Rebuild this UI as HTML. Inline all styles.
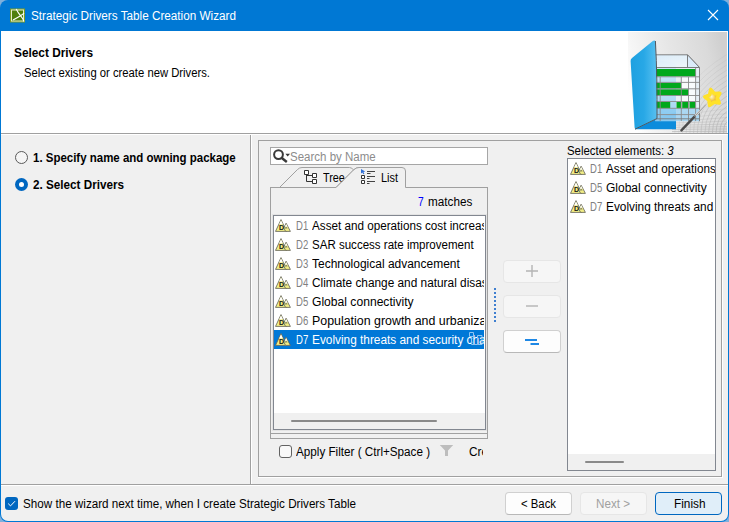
<!DOCTYPE html>
<html><head><meta charset="utf-8"><title>Strategic Drivers Table Creation Wizard</title>
<style>
html,body{margin:0;padding:0;}
body{width:729px;height:522px;overflow:hidden;background:#7fb0dc;position:relative;font-family:"Liberation Sans", sans-serif;font-size:12px;color:#000;}
.a{position:absolute;box-sizing:border-box;}
.t{position:absolute;white-space:nowrap;line-height:14px;font-size:12px;transform-origin:0 50%;}
.ic{position:absolute;overflow:visible;}
.clip{position:absolute;overflow:hidden;}
.selbg{position:absolute;left:0;width:100%;height:19px;background:#0078d7;}
.btn{position:absolute;box-sizing:border-box;border:1px solid #d0d0d0;border-radius:4px;background:#fdfdfd;}
</style></head><body>
<!-- window frame -->
<div class="a" style="left:0;top:0;width:729px;height:522px;background:#0078d4;border-radius:8px;"></div>
<div class="a" style="left:1px;top:31px;width:727px;height:490px;background:#f0f0f0;border-radius:0 0 7px 7px;"></div>
<!-- title bar -->
<svg class="ic" style="left:10px;top:8px" width="16" height="15" viewBox="0 0 16 15">
<rect x="0" y="0.500" width="15" height="14" fill="#7a9a22"/>
<rect x="1.500" y="2" width="12" height="11" fill="#4f7f0c" stroke="#e4ecc8" stroke-width="1"/>
<path d="M6.200 1 Q8.200 5 10.500 7.700 T14 13.500 M3 12 Q7.500 9.500 10.500 7.700 T14 5" stroke="#fff" stroke-width="1.100" fill="none"/>
</svg>
<svg class="ic" style="left:707px;top:9px" width="12" height="12" viewBox="0 0 12 12"><path d="M1 1 L11 11 M11 1 L1 11" stroke="#fff" stroke-width="1.1" fill="none"/></svg>
<!-- header -->
<div class="a" style="left:1px;top:31px;width:727px;height:102px;background:#fff;"></div>
<svg class="ic" style="left:628px;top:32px" width="99" height="101" viewBox="628 32 99 101">
<defs>
<linearGradient id="bg" x1="0" y1="0.6" x2="1" y2="0.35">
<stop offset="0" stop-color="#ffffff"/><stop offset="0.14" stop-color="#f6f6f6"/><stop offset="0.5" stop-color="#e6e6e6"/><stop offset="0.85" stop-color="#dadada"/><stop offset="1" stop-color="#d0d0d0"/>
</linearGradient>
<linearGradient id="cover" x1="0" y1="0" x2="1" y2="0">
<stop offset="0" stop-color="#1ea0e0"/><stop offset="0.5" stop-color="#28a8e6"/><stop offset="1" stop-color="#58c0f0"/>
</linearGradient>
<linearGradient id="back" x1="0" y1="0" x2="0" y2="1">
<stop offset="0" stop-color="#a8d8f6"/><stop offset="0.6" stop-color="#58b4ea"/><stop offset="1" stop-color="#0a88d8"/>
</linearGradient>
<linearGradient id="glass" x1="0" y1="0" x2="1" y2="1">
<stop offset="0" stop-color="#d8ecfa"/><stop offset="1" stop-color="#f4f8fc"/>
</linearGradient>
<radialGradient id="star" cx="0.45" cy="0.45" r="0.6">
<stop offset="0" stop-color="#fff6c8"/><stop offset="0.45" stop-color="#f0c040"/><stop offset="1" stop-color="#ffe432"/>
</radialGradient>
<clipPath id="imgclip"><rect x="628" y="32" width="99" height="101"/></clipPath>
</defs>
<g clip-path="url(#imgclip)">
<rect x="628" y="32" width="99" height="101" fill="url(#bg)"/>
<!-- perspective mesh -->
<g fill="none" stroke="#b6b6b6" stroke-width="0.8">
<path d="M674.9 133 Q674.9 85.6 727 54.4" opacity="0.25"/>
<path d="M678.7 133 Q678.7 88.6 727 59.6" opacity="0.31"/>
<path d="M682.4 133 Q682.4 91.6 727 64.8" opacity="0.37"/>
<path d="M686.2 133 Q686.2 94.5 727 70.0" opacity="0.43"/>
<path d="M689.9 133 Q689.9 97.5 727 75.2" opacity="0.49"/>
<path d="M693.6 133 Q693.6 100.4 727 80.4" opacity="0.55"/>
<path d="M697.4 133 Q697.4 103.4 727 85.6" opacity="0.61"/>
<path d="M701.1 133 Q701.1 106.3 727 90.8" opacity="0.67"/>
<path d="M704.9 133 Q704.9 109.3 727 96.0" opacity="0.73"/>
<path d="M708.6 133 Q708.6 112.2 727 101.2" opacity="0.79"/>
<path d="M712.4 133 Q712.4 115.2 727 106.4" opacity="0.85"/>
<path d="M716.1 133 Q716.1 118.1 727 111.6" opacity="0.91"/>
<path d="M719.9 133 Q719.9 121.1 727 116.8" opacity="0.97"/>
<path d="M723.6 133 Q723.6 124.0 727 122.0" opacity="1.00"/>
<path d="M727.3 133 Q727.3 127.0 727 127.2" opacity="1.00"/>
<path d="M672 131.6 Q700 131.3 727 131.4" opacity="0.90"/>
<path d="M672 129.4 Q700 129.1 727 129" opacity="0.82"/>
<path d="M672 127.3 Q700 127.0 727 126.6" opacity="0.74"/>
<path d="M672 125.2 Q700 124.9 727 124" opacity="0.66"/>
<path d="M672 123 Q700 122.7 727 121" opacity="0.58"/>
<path d="M672 120.5 Q700 120.2 727 117.5" opacity="0.50"/>
<path d="M672 117.5 Q700 117.2 727 113.5" opacity="0.42"/>
<path d="M672 114 Q700 113.7 727 108.5" opacity="0.34"/>
<path d="M672 110 Q700 109.7 727 102.5" opacity="0.26"/>
</g>
<!-- back cover (seen through glass) -->
<path d="M657 60 L671 62 L676 64 L676 129 L657 129 Z" fill="url(#back)"/>
<path d="M634.800 129.200 L676 129.200 L676 112 L657 118.500 Z" fill="#0c8cdc"/>
<!-- glass box -->
<path d="M648.500 54.800 L687.500 54.800 L699.500 67.500 L655.200 67.500 Z" fill="url(#glass)" stroke="#6e6e6e" stroke-width="0.9" opacity="0.95"/>
<path d="M687.500 54.800 L699.500 67.500 L699.500 121 L687.500 108 Z" fill="#e4f0fa" opacity="0.5"/>
<path d="M687.500 54.800 L699.500 67.500 L687.500 67.500 Z" fill="#dcecfa" stroke="#6e6e6e" stroke-width="0.900" stroke-linejoin="round"/>
<rect x="655.200" y="67.500" width="44.500" height="53.700" fill="#e8f3fb" opacity="0.62"/>
<rect x="655.200" y="108.400" width="44.500" height="12.800" fill="#7cc4f0" opacity="0.55"/>
<!-- green bars -->
<g fill="#00a81c">
<rect x="652.500" y="69" width="43.300" height="7.400"/>
<rect x="655.200" y="82.900" width="26" height="5.600"/>
<rect x="655.200" y="89.300" width="33" height="6"/>
<rect x="655.200" y="102" width="15" height="6.200"/>
<rect x="676.500" y="102" width="4.500" height="6.200"/>
<rect x="682.200" y="102" width="6" height="6.200"/>
<rect x="689.500" y="102" width="6" height="6.200"/>
</g>
<!-- white cells -->
<g fill="#ffffff" opacity="0.75">
<rect x="681.800" y="77.400" width="6.200" height="4.800"/><rect x="689" y="77.400" width="6.300" height="4.800"/>
<rect x="681.800" y="83" width="6.200" height="5.200"/><rect x="689" y="83" width="6.300" height="5.200"/>
<rect x="689" y="89.400" width="6.300" height="5.600"/>
<rect x="681.800" y="96" width="6.200" height="5"/><rect x="689" y="96" width="6.300" height="5"/>
</g>
<!-- grid -->
<g fill="none" stroke="#8a8a8a" stroke-width="0.9">
<path d="M655.200 76.800 H699.500 M655.200 82.400 H699.500 M655.200 88.800 H699.500 M655.200 95.500 H699.500 M655.200 101.500 H699.500 M655.200 108.300 H699.500 M655.200 114.600 H699.500"/>
<path d="M660.200 76.800 V121 M681.300 76.800 V121 M688.500 76.800 V121 M695.600 67.500 V121"/>
<path d="M655.200 67.500 H699.500 V121.200 M699.500 118.800 H655.200" stroke="#787878"/>
</g>
<!-- front cover -->
<path d="M630.600 61 Q630.400 59.300 632 58 L652.500 41.200 Q655 39.500 655.600 42 L657 118.500 L636.500 129 Q634.800 129.600 634.600 127.500 Z" fill="url(#cover)"/>
<path d="M655.400 41 Q656.500 60 656.800 80 T657 118.500 L635 129.200" fill="none" stroke="#505860" stroke-width="1"/>
<!-- wand -->
<path d="M681.400 130.400 L706 104.500" stroke="#d8d8d8" stroke-width="2.200" stroke-linecap="round"/>
<path d="M681.400 130.400 L694.500 116.600" stroke="#4a4a4a" stroke-width="2.400" stroke-linecap="round"/>
<path d="M694.500 116.600 L706 104.500" stroke="#9a9a9a" stroke-width="1"/>
<!-- star -->
<path d="M710.800 89.600 L714.400 93.600 L719.800 93.200 L717.300 98 L719.200 103 L714 102.200 L709.600 105.400 L709 100.200 L704.800 96.800 L709.600 94.800 Z" fill="url(#star)" stroke="#ffe22a" stroke-width="3.600" stroke-linejoin="round"/>
</g>
</svg>

<div class="a" style="left:1px;top:133px;width:727px;height:1px;background:#a0a0a0;"></div>
<div class="a" style="left:1px;top:134px;width:727px;height:1px;background:#fff;"></div>
<!-- left steps -->
<div class="a" style="left:15px;top:151px;width:13px;height:13px;border:1px solid #5a5a5a;border-radius:50%;background:#f5f5f5;"></div>
<div class="a" style="left:15px;top:178px;width:13px;height:13px;border-radius:50%;background:#0067c0;"></div>
<div class="a" style="left:19px;top:182px;width:5px;height:5px;border-radius:50%;background:#fff;"></div>
<!-- vertical divider -->
<div class="a" style="left:250px;top:135px;width:1px;height:349px;background:#a0a0a0;"></div>
<div class="a" style="left:251px;top:135px;width:1px;height:349px;background:#fff;"></div>
<!-- right etched panel -->
<div class="a" style="left:258px;top:140px;width:465px;height:338px;border:1px solid #fff;"></div>
<div class="a" style="left:258px;top:140px;width:464px;height:337px;border:1px solid #a0a0a0;"></div>
<!-- search -->
<div class="a" style="left:270px;top:147px;width:218px;height:18px;border:1px solid #a6a6a6;background:#fff;"></div>
<svg class="ic" style="left:272px;top:147px" width="18" height="17" viewBox="0 0 18 17">
<circle cx="6.500" cy="7.600" r="4.400" fill="none" stroke="#3a3a3a" stroke-width="2"/>
<path d="M9.800 11 L14.800 15" stroke="#3a3a3a" stroke-width="2.400"/>
<path d="M13.400 6.800 L18 6.800 L15.700 9.600 Z" fill="#3a3a3a"/>
</svg>
<!-- tabs -->
<svg class="ic" style="left:268px;top:165px" width="224" height="26" viewBox="268 165 224 26">
<path d="M270.5 437.5 L270.5 187.5 L336 187.5" fill="none" stroke="#a0a0a0"/>
<path d="M279.500 187.500 L297.500 169.500 Q299.500 167.500 302 167.500 L349.500 167.500 Q352 167.500 353.800 170.200" fill="none" stroke="#a0a0a0"/>
<path d="M336 187.500 L353.500 170 Q356 167.500 359 167.500 L402 167.500 Q405.500 167.500 405.500 171 L405.500 187.500 L487.500 187.500" fill="none" stroke="#a0a0a0"/>
</svg>
<div class="a" style="left:270px;top:187px;width:1px;height:247px;background:#a0a0a0;"></div>
<div class="a" style="left:487px;top:187px;width:1px;height:247px;background:#a0a0a0;"></div>
<div class="a" style="left:270px;top:433px;width:218px;height:6px;border:1px solid #a0a0a0;"></div>
<!-- tree icon -->
<svg class="ic" style="left:304px;top:170px" width="14" height="14" viewBox="0 0 14 14">
<path d="M0.500 0.500 H4.500 V4.500 H0.500 Z M8.500 3.500 H12.500 V7.500 H8.500 Z M8.500 9.500 H12.500 V13.500 H8.500 Z" fill="#fff" stroke="#333" stroke-width="1"/>
<path d="M2.500 4.500 V11.500 H8.500 M2.500 5.500 H8.500" fill="none" stroke="#333" stroke-width="1"/>
</svg>
<!-- list icon -->
<svg class="ic" style="left:361px;top:169px" width="15" height="16" viewBox="0 0 15 16">
<path d="M0 0 L4.200 2.600 L2.400 3 L3.400 4.800 L2.400 5.200 L1.400 3.500 L0 4.600 Z" fill="#2f6fd8"/>
<path d="M0.500 6.500 H3.500 V9.500 H0.500 Z M0.500 11.500 H3.500 V14.500 H0.500 Z" fill="#fff" stroke="#333"/>
<path d="M6 2.500 H14 M6 4.500 H9.500 M6 7.500 H14 M6 9.500 H8.500 M6 12.500 H14 M6 14.500 H8.500" stroke="#444" fill="none"/>
</svg>
<!-- list box -->
<div class="a" style="left:272px;top:214px;width:215px;height:217px;border:1px solid #e3e3e3;"></div>
<div class="a" style="left:273px;top:215px;width:213px;height:215px;border:1px solid #828790;background:#fff;"></div>
<div class="clip" style="left:274px;top:216px;width:210px;height:197px;">
<div style="position:absolute;left:-274px;top:-216px;width:729px;height:522px;">
<svg class="ic" style="left:275px;top:219px" width="16" height="14" viewBox="0 0 16 14">
<path d="M6 0.600 L0.500 12.400 L11.600 12.400 Z" fill="#f2ee84" stroke="#66665c" stroke-width="0.850" stroke-linejoin="round"/>
<path d="M11.100 4.200 L8.800 9 L10.600 12.400 L15.400 12.400 Z" fill="#f2ee84" stroke="#66665c" stroke-width="0.850" stroke-linejoin="round"/>
<path d="M6 1.500 L4.100 5.600 L5.200 4.900 L6.100 5.700 L7 4.800 L8 5.600 Z" fill="#fff"/>
<path d="M11.100 5.100 L9.800 7.900 L10.600 7.400 L11.200 8.100 L11.800 7.400 L12.600 8 Z" fill="#fff"/>
<path d="M10.300 9.600 L11.100 7.900 L12 9.600 M10.500 9 H11.700" fill="none" stroke="#66665c" stroke-width="0.600"/>
<text x="6.500" y="11.300" font-family='"Liberation Sans",sans-serif' font-weight="bold" font-size="7" text-anchor="middle" fill="#151515">D</text>
</svg>
<span class="t" style="left:296px;top:219px;transform:scaleX(0.7951);color:#7f7f7f;" id="Lid0">D1</span>
<span class="t" style="left:312.4px;top:219px;transform:scaleX(0.9736);" id="Lt0">Asset and operations cost increase</span>
<svg class="ic" style="left:275px;top:238px" width="16" height="14" viewBox="0 0 16 14">
<path d="M6 0.600 L0.500 12.400 L11.600 12.400 Z" fill="#f2ee84" stroke="#66665c" stroke-width="0.850" stroke-linejoin="round"/>
<path d="M11.100 4.200 L8.800 9 L10.600 12.400 L15.400 12.400 Z" fill="#f2ee84" stroke="#66665c" stroke-width="0.850" stroke-linejoin="round"/>
<path d="M6 1.500 L4.100 5.600 L5.200 4.900 L6.100 5.700 L7 4.800 L8 5.600 Z" fill="#fff"/>
<path d="M11.100 5.100 L9.800 7.900 L10.600 7.400 L11.200 8.100 L11.800 7.400 L12.600 8 Z" fill="#fff"/>
<path d="M10.300 9.600 L11.100 7.900 L12 9.600 M10.500 9 H11.700" fill="none" stroke="#66665c" stroke-width="0.600"/>
<text x="6.500" y="11.300" font-family='"Liberation Sans",sans-serif' font-weight="bold" font-size="7" text-anchor="middle" fill="#151515">D</text>
</svg>
<span class="t" style="left:296px;top:238px;transform:scaleX(0.7951);color:#7f7f7f;" id="Lid1">D2</span>
<span class="t" style="left:312.4px;top:238px;transform:scaleX(0.9615);" id="Lt1">SAR success rate improvement</span>
<svg class="ic" style="left:275px;top:257px" width="16" height="14" viewBox="0 0 16 14">
<path d="M6 0.600 L0.500 12.400 L11.600 12.400 Z" fill="#f2ee84" stroke="#66665c" stroke-width="0.850" stroke-linejoin="round"/>
<path d="M11.100 4.200 L8.800 9 L10.600 12.400 L15.400 12.400 Z" fill="#f2ee84" stroke="#66665c" stroke-width="0.850" stroke-linejoin="round"/>
<path d="M6 1.500 L4.100 5.600 L5.200 4.900 L6.100 5.700 L7 4.800 L8 5.600 Z" fill="#fff"/>
<path d="M11.100 5.100 L9.800 7.900 L10.600 7.400 L11.200 8.100 L11.800 7.400 L12.600 8 Z" fill="#fff"/>
<path d="M10.300 9.600 L11.100 7.900 L12 9.600 M10.500 9 H11.700" fill="none" stroke="#66665c" stroke-width="0.600"/>
<text x="6.500" y="11.300" font-family='"Liberation Sans",sans-serif' font-weight="bold" font-size="7" text-anchor="middle" fill="#151515">D</text>
</svg>
<span class="t" style="left:296px;top:257px;transform:scaleX(0.7951);color:#7f7f7f;" id="Lid2">D3</span>
<span class="t" style="left:312.4px;top:257px;transform:scaleX(0.9979);" id="Lt2">Technological advancement</span>
<svg class="ic" style="left:275px;top:276px" width="16" height="14" viewBox="0 0 16 14">
<path d="M6 0.600 L0.500 12.400 L11.600 12.400 Z" fill="#f2ee84" stroke="#66665c" stroke-width="0.850" stroke-linejoin="round"/>
<path d="M11.100 4.200 L8.800 9 L10.600 12.400 L15.400 12.400 Z" fill="#f2ee84" stroke="#66665c" stroke-width="0.850" stroke-linejoin="round"/>
<path d="M6 1.500 L4.100 5.600 L5.200 4.900 L6.100 5.700 L7 4.800 L8 5.600 Z" fill="#fff"/>
<path d="M11.100 5.100 L9.800 7.900 L10.600 7.400 L11.200 8.100 L11.800 7.400 L12.600 8 Z" fill="#fff"/>
<path d="M10.300 9.600 L11.100 7.900 L12 9.600 M10.500 9 H11.700" fill="none" stroke="#66665c" stroke-width="0.600"/>
<text x="6.500" y="11.300" font-family='"Liberation Sans",sans-serif' font-weight="bold" font-size="7" text-anchor="middle" fill="#151515">D</text>
</svg>
<span class="t" style="left:296px;top:276px;transform:scaleX(0.7951);color:#7f7f7f;" id="Lid3">D4</span>
<span class="t" style="left:312.4px;top:276px;transform:scaleX(0.9864);" id="Lt3">Climate change and natural disasters</span>
<svg class="ic" style="left:275px;top:295px" width="16" height="14" viewBox="0 0 16 14">
<path d="M6 0.600 L0.500 12.400 L11.600 12.400 Z" fill="#f2ee84" stroke="#66665c" stroke-width="0.850" stroke-linejoin="round"/>
<path d="M11.100 4.200 L8.800 9 L10.600 12.400 L15.400 12.400 Z" fill="#f2ee84" stroke="#66665c" stroke-width="0.850" stroke-linejoin="round"/>
<path d="M6 1.500 L4.100 5.600 L5.200 4.900 L6.100 5.700 L7 4.800 L8 5.600 Z" fill="#fff"/>
<path d="M11.100 5.100 L9.800 7.900 L10.600 7.400 L11.200 8.100 L11.800 7.400 L12.600 8 Z" fill="#fff"/>
<path d="M10.300 9.600 L11.100 7.900 L12 9.600 M10.500 9 H11.700" fill="none" stroke="#66665c" stroke-width="0.600"/>
<text x="6.500" y="11.300" font-family='"Liberation Sans",sans-serif' font-weight="bold" font-size="7" text-anchor="middle" fill="#151515">D</text>
</svg>
<span class="t" style="left:296px;top:295px;transform:scaleX(0.7951);color:#7f7f7f;" id="Lid4">D5</span>
<span class="t" style="left:312.4px;top:295px;transform:scaleX(1.0091);" id="Lt4">Global connectivity</span>
<svg class="ic" style="left:275px;top:314px" width="16" height="14" viewBox="0 0 16 14">
<path d="M6 0.600 L0.500 12.400 L11.600 12.400 Z" fill="#f2ee84" stroke="#66665c" stroke-width="0.850" stroke-linejoin="round"/>
<path d="M11.100 4.200 L8.800 9 L10.600 12.400 L15.400 12.400 Z" fill="#f2ee84" stroke="#66665c" stroke-width="0.850" stroke-linejoin="round"/>
<path d="M6 1.500 L4.100 5.600 L5.200 4.900 L6.100 5.700 L7 4.800 L8 5.600 Z" fill="#fff"/>
<path d="M11.100 5.100 L9.800 7.900 L10.600 7.400 L11.200 8.100 L11.800 7.400 L12.600 8 Z" fill="#fff"/>
<path d="M10.300 9.600 L11.100 7.900 L12 9.600 M10.500 9 H11.700" fill="none" stroke="#66665c" stroke-width="0.600"/>
<text x="6.500" y="11.300" font-family='"Liberation Sans",sans-serif' font-weight="bold" font-size="7" text-anchor="middle" fill="#151515">D</text>
</svg>
<span class="t" style="left:296px;top:314px;transform:scaleX(0.7951);color:#7f7f7f;" id="Lid5">D6</span>
<span class="t" style="left:312.4px;top:314px;transform:scaleX(1.0328);" id="Lt5">Population growth and urbanization</span>
<div class="selbg" style="top:330px"></div>
<svg class="ic" style="left:275px;top:333px" width="16" height="14" viewBox="0 0 16 14">
<path d="M6 0.600 L0.500 12.400 L11.600 12.400 Z" fill="#f2ee84" stroke="#66665c" stroke-width="0.850" stroke-linejoin="round"/>
<path d="M11.100 4.200 L8.800 9 L10.600 12.400 L15.400 12.400 Z" fill="#f2ee84" stroke="#66665c" stroke-width="0.850" stroke-linejoin="round"/>
<path d="M6 1.500 L4.100 5.600 L5.200 4.900 L6.100 5.700 L7 4.800 L8 5.600 Z" fill="#fff"/>
<path d="M11.100 5.100 L9.800 7.900 L10.600 7.400 L11.200 8.100 L11.800 7.400 L12.600 8 Z" fill="#fff"/>
<path d="M10.300 9.600 L11.100 7.900 L12 9.600 M10.500 9 H11.700" fill="none" stroke="#66665c" stroke-width="0.600"/>
<text x="6.500" y="11.300" font-family='"Liberation Sans",sans-serif' font-weight="bold" font-size="7" text-anchor="middle" fill="#151515">D</text>
</svg>
<span class="t" style="left:296px;top:333px;transform:scaleX(0.7951);color:#fff;" id="Lid6">D7</span>
<span class="t" style="left:312.4px;top:333px;transform:scaleX(0.9864);color:#fff;" id="Lt6">Evolving threats and security challenges</span>
</div></div>
<div class="a" style="left:274px;top:413px;width:211px;height:16px;background:#f0f0f0;"></div>
<div class="a" style="left:291px;top:420px;width:146px;height:2px;background:#8a8a8a;border-radius:1px;"></div>
<!-- hierarchy overlay icon on selected row -->
<svg class="ic" style="left:468px;top:331px" width="16" height="16" viewBox="0 0 16 16">
<path d="M1.500 1.500 H5.500 V5.500 H1.500 Z M9.500 4.500 H14 V13.500 H9.500 Z M3.500 5.500 V13.500 H9.500" fill="none" stroke="#8ec4f2" stroke-width="1"/>
</svg>
<!-- apply filter -->
<div class="a" style="left:279px;top:445px;width:13px;height:13px;border:1px solid #626262;border-radius:3px;background:#f8f8f8;"></div>
<svg class="ic" style="left:439px;top:444px" width="16" height="13" viewBox="0 0 16 13">
<path d="M0.800 1 H14.200 L9 6.500 V12 H6 V6.500 Z" fill="#bdbdbd"/>
</svg>
<div class="clip" style="left:465px;top:444px;width:18px;height:16px;"><span class="t" style="left:4px;top:1px;transform:scaleX(0.9864)" id="cr">Create</span></div>
<!-- splitter dots -->
<svg class="ic" style="left:494px;top:288px" width="2" height="34" viewBox="0 0 2 34">
<rect x="0" y="0" width="2" height="2" fill="#3f7fd0"/><rect x="0" y="4" width="2" height="2" fill="#3f7fd0"/><rect x="0" y="8" width="2" height="2" fill="#3f7fd0"/><rect x="0" y="12" width="2" height="2" fill="#3f7fd0"/><rect x="0" y="16" width="2" height="2" fill="#3f7fd0"/><rect x="0" y="20" width="2" height="2" fill="#3f7fd0"/><rect x="0" y="24" width="2" height="2" fill="#3f7fd0"/><rect x="0" y="28" width="2" height="2" fill="#3f7fd0"/><rect x="0" y="32" width="2" height="2" fill="#3f7fd0"/>
</svg>
<!-- middle buttons -->
<div class="btn" style="left:503px;top:260px;width:58px;height:23px;border-color:#e6e6e6;background:#f6f6f6;"></div>
<div class="btn" style="left:503px;top:295px;width:58px;height:23px;border-color:#e6e6e6;background:#f6f6f6;"></div>
<div class="btn" style="left:503px;top:330px;width:58px;height:23px;border-color:#d0d0d0;border-bottom-color:#b8b8b8;background:#fdfdfd;"></div>
<svg class="ic" style="left:526px;top:265px" width="12" height="12" viewBox="0 0 12 12"><path d="M6 0 V12 M0 6 H12" stroke="#b4b4b4" stroke-width="1.400" fill="none"/></svg>
<svg class="ic" style="left:526px;top:300px" width="12" height="12" viewBox="0 0 12 12"><path d="M0 6 H12" stroke="#b4b4b4" stroke-width="1.400" fill="none"/></svg>
<svg class="ic" style="left:524px;top:337px" width="16" height="10" viewBox="0 0 16 10"><path d="M1 3 H13 M6.500 7 H15" stroke="#1e88e5" stroke-width="2" fill="none"/></svg>
<!-- selected list -->
<div class="a" style="left:567px;top:158px;width:149px;height:313px;border:1px solid #828790;background:#fff;"></div>
<div class="clip" style="left:568px;top:159px;width:147px;height:295px;">
<div style="position:absolute;left:-568px;top:-159px;width:729px;height:522px;">
<svg class="ic" style="left:569.5px;top:162px" width="16" height="14" viewBox="0 0 16 14">
<path d="M6 0.600 L0.500 12.400 L11.600 12.400 Z" fill="#f2ee84" stroke="#66665c" stroke-width="0.850" stroke-linejoin="round"/>
<path d="M11.100 4.200 L8.800 9 L10.600 12.400 L15.400 12.400 Z" fill="#f2ee84" stroke="#66665c" stroke-width="0.850" stroke-linejoin="round"/>
<path d="M6 1.500 L4.100 5.600 L5.200 4.900 L6.100 5.700 L7 4.800 L8 5.600 Z" fill="#fff"/>
<path d="M11.100 5.100 L9.800 7.900 L10.600 7.400 L11.200 8.100 L11.800 7.400 L12.600 8 Z" fill="#fff"/>
<path d="M10.300 9.600 L11.100 7.900 L12 9.600 M10.500 9 H11.700" fill="none" stroke="#66665c" stroke-width="0.600"/>
<text x="6.500" y="11.300" font-family='"Liberation Sans",sans-serif' font-weight="bold" font-size="7" text-anchor="middle" fill="#151515">D</text>
</svg>
<span class="t" style="left:590px;top:162px;transform:scaleX(0.7951);color:#7f7f7f;" id="Rid0">D1</span>
<span class="t" style="left:606.3px;top:162px;transform:scaleX(0.9736);" id="Rt0">Asset and operations cost increase</span>
<svg class="ic" style="left:569.5px;top:181px" width="16" height="14" viewBox="0 0 16 14">
<path d="M6 0.600 L0.500 12.400 L11.600 12.400 Z" fill="#f2ee84" stroke="#66665c" stroke-width="0.850" stroke-linejoin="round"/>
<path d="M11.100 4.200 L8.800 9 L10.600 12.400 L15.400 12.400 Z" fill="#f2ee84" stroke="#66665c" stroke-width="0.850" stroke-linejoin="round"/>
<path d="M6 1.500 L4.100 5.600 L5.200 4.900 L6.100 5.700 L7 4.800 L8 5.600 Z" fill="#fff"/>
<path d="M11.100 5.100 L9.800 7.900 L10.600 7.400 L11.200 8.100 L11.800 7.400 L12.600 8 Z" fill="#fff"/>
<path d="M10.300 9.600 L11.100 7.900 L12 9.600 M10.500 9 H11.700" fill="none" stroke="#66665c" stroke-width="0.600"/>
<text x="6.500" y="11.300" font-family='"Liberation Sans",sans-serif' font-weight="bold" font-size="7" text-anchor="middle" fill="#151515">D</text>
</svg>
<span class="t" style="left:590px;top:181px;transform:scaleX(0.7951);color:#7f7f7f;" id="Rid1">D5</span>
<span class="t" style="left:606.3px;top:181px;transform:scaleX(0.9998);" id="Rt1">Global connectivity</span>
<svg class="ic" style="left:569.5px;top:200px" width="16" height="14" viewBox="0 0 16 14">
<path d="M6 0.600 L0.500 12.400 L11.600 12.400 Z" fill="#f2ee84" stroke="#66665c" stroke-width="0.850" stroke-linejoin="round"/>
<path d="M11.100 4.200 L8.800 9 L10.600 12.400 L15.400 12.400 Z" fill="#f2ee84" stroke="#66665c" stroke-width="0.850" stroke-linejoin="round"/>
<path d="M6 1.500 L4.100 5.600 L5.200 4.900 L6.100 5.700 L7 4.800 L8 5.600 Z" fill="#fff"/>
<path d="M11.100 5.100 L9.800 7.900 L10.600 7.400 L11.200 8.100 L11.800 7.400 L12.600 8 Z" fill="#fff"/>
<path d="M10.300 9.600 L11.100 7.900 L12 9.600 M10.500 9 H11.700" fill="none" stroke="#66665c" stroke-width="0.600"/>
<text x="6.500" y="11.300" font-family='"Liberation Sans",sans-serif' font-weight="bold" font-size="7" text-anchor="middle" fill="#151515">D</text>
</svg>
<span class="t" style="left:590px;top:200px;transform:scaleX(0.7951);color:#7f7f7f;" id="Rid2">D7</span>
<span class="t" style="left:606.3px;top:200px;transform:scaleX(0.9864);" id="Rt2">Evolving threats and security challenges</span>
</div></div>
<div class="a" style="left:568px;top:454px;width:147px;height:16px;background:#f0f0f0;"></div>
<div class="a" style="left:585px;top:461px;width:39px;height:2px;background:#8a8a8a;border-radius:1px;"></div>
<!-- bottom bar -->
<div class="a" style="left:1px;top:484px;width:727px;height:1px;background:#a0a0a0;"></div>
<div class="a" style="left:1px;top:485px;width:727px;height:1px;background:#fff;"></div>
<div class="a" style="left:5px;top:497px;width:13px;height:13px;border-radius:3px;background:#0067c0;"></div>
<svg class="ic" style="left:5px;top:497px" width="13" height="13" viewBox="0 0 13 13"><path d="M3.200 6.600 L5.500 8.900 L10 4.200" stroke="#fff" stroke-width="1" fill="none"/></svg>
<div class="btn" style="left:505px;top:492px;width:67px;height:23px;border-color:#d0d0d0;border-bottom-color:#b8b8b8;background:#fdfdfd;"></div>
<div class="btn" style="left:580px;top:492px;width:67px;height:23px;border-color:#e6e6e6;background:#f6f6f6;"></div>
<div class="btn" style="left:655px;top:492px;width:67px;height:23px;border-color:#0067c0;background:#e0eef9;"></div>
<!-- texts -->
<span class="t" style="left:31px;top:9px;transform:scaleX(0.9768);color:#fff;" id="title">Strategic Drivers Table Creation Wizard</span>
<span class="t" style="left:14px;top:46px;transform:scaleX(0.9867);font-weight:bold;" id="h1">Select Drivers</span>
<span class="t" style="left:23.5px;top:66px;transform:scaleX(0.9390);" id="h2">Select existing or create new Drivers.</span>
<span class="t" style="left:32.5px;top:151px;transform:scaleX(0.9559);font-weight:bold;" id="s1">1. Specify name and owning package</span>
<span class="t" style="left:32.5px;top:178px;transform:scaleX(0.9742);font-weight:bold;" id="s2">2. Select Drivers</span>
<span class="t" style="left:289.8px;top:150px;transform:scaleX(0.9589);color:#8c8c8c;" id="search">Search by Name</span>
<span class="t" style="left:323.2px;top:171px;transform:scaleX(0.8995);" id="tree">Tree</span>
<span class="t" style="left:381px;top:171px;transform:scaleX(0.9097);" id="list">List</span>
<span class="t" style="left:418.2px;top:195px;transform:scaleX(0.8523);color:#0000ff;" id="m7">7</span>
<span class="t" style="left:427.5px;top:195px;transform:scaleX(0.9766);" id="match">matches</span>
<span class="t" style="left:296.4px;top:445px;transform:scaleX(0.9737);" id="apply">Apply Filter ( Ctrl+Space )</span>
<span class="t" style="left:567.4px;top:144px;transform:scaleX(0.9510);" id="sel">Selected elements: <i>3</i></span>
<span class="t" style="left:22.5px;top:497px;transform:scaleX(0.9720);" id="show">Show the wizard next time, when I create Strategic Drivers Table</span>
<span class="t" style="left:521px;top:497px;transform:scaleX(0.9451);" id="back">&lt; Back</span>
<span class="t" style="left:596px;top:497px;transform:scaleX(0.9710);color:#a0a0a0;" id="next">Next &gt;</span>
<span class="t" style="left:673.5px;top:497px;transform:scaleX(0.9839);" id="finish">Finish</span>
<!-- TABCOVER: List tab overlaps the end of the Tree label -->
<svg class="ic" style="left:330px;top:165px" width="32" height="26" viewBox="330 165 32 26">
<path d="M336.500 187.500 L353.500 170 Q356 167.500 359 167.500 L360 167.500 L360 188 Z" fill="#f0f0f0"/>
<path d="M336 187.500 L353.500 170 Q356 167.500 359 167.500 L360 167.500" fill="none" stroke="#a0a0a0"/>
</svg>
</body></html>
